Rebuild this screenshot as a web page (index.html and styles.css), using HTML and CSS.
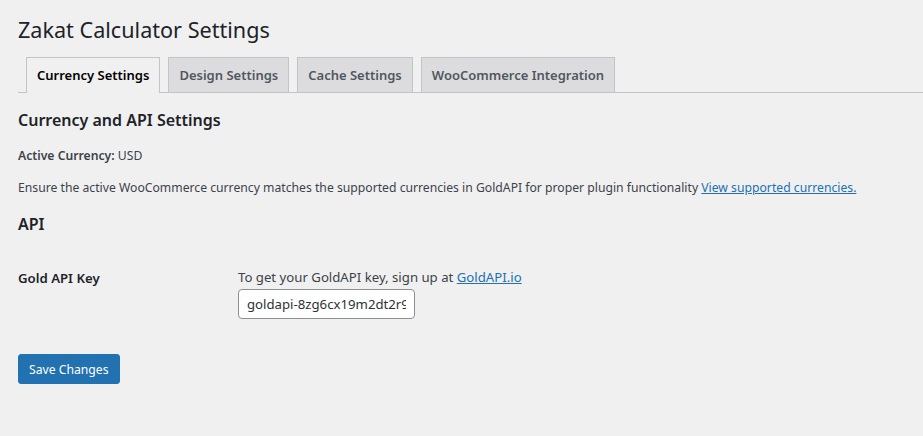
FILE: index.html
```html
<!DOCTYPE html>
<html lang="en">
<head>
  <meta charset="UTF-8">
  <title>Zakat Calculator Settings</title>
  <link rel="stylesheet" href="styles.css">
</head>
<body>

<div class="wrap">
  <h1>Zakat Calculator Settings</h1>

  <nav class="nav-tab-wrapper">
    <a href="#" class="nav-tab nav-tab-active">Currency Settings</a>
    <a href="#" class="nav-tab">Design Settings</a>
    <a href="#" class="nav-tab">Cache Settings</a>
    <a href="#" class="nav-tab">WooCommerce Integration</a>
  </nav>

  <form>
    <h2>Currency and API Settings</h2>
    <p><strong>Active Currency:</strong> USD</p>
    <p>Ensure the active WooCommerce currency matches the supported currencies in GoldAPI for proper plugin functionality <a href="#">View supported currencies.</a></p>

    <h2>API</h2>
    <table class="form-table">
      <tr>
        <th>Gold API Key</th>
        <td>
          <p class="desc">To get your GoldAPI key, sign up at <a href="#">GoldAPI.io</a></p>
          <input type="text" class="api-input" value="goldapi-8zg6cx19m2dt2r9x-io">
        </td>
      </tr>
    </table>

    <p class="submit"><button type="button" class="button-primary">Save Changes</button></p>
  </form>
</div>

</body>
</html>
```

FILE: styles.css
```css
body {
  margin: 0;
  background-color: #f0f0f1;
  color: #3c434a;
  font-family: "Noto Sans", sans-serif;
  font-size: 12.2px;
  line-height: 1.4;
}
.wrap {
  padding: 0 0 0 18px;
}
h1 {
  font-size: 21.6px;
  font-weight: 400;
  color: #1d2327;
  margin: 0;
  padding: 15px 0 4px;
  line-height: 30px;
}
.nav-tab-wrapper {
  display: flex;
  gap: 8px;
  padding: 8px 0 0 8px;
  border-bottom: 1px solid #c3c4c7;
}
.nav-tab {
  display: block;
  padding: 5px 10px;
  font-size: 13px;
  line-height: 24px;
  font-weight: 600;
  color: #50575e;
  text-decoration: none;
  background: #dcdcde;
  border: 1px solid #c3c4c7;
  border-bottom: none;
}
.nav-tab-active {
  background: #f0f0f1;
  color: #000;
  margin-bottom: -1px;
  padding-bottom: 6px;
}
h2 {
  font-size: 16px;
  font-weight: 600;
  color: #1d2327;
  margin: 16px 0 15px;
  line-height: 22px;
}
p {
  margin: 13px 0;
  line-height: 19px;
}
strong {
  font-weight: 600;
}
a {
  color: #2271b1;
}
.form-table {
  border-collapse: collapse;
  margin-top: 15px;
}
.form-table th {
  width: 200px;
  text-align: left;
  vertical-align: top;
  padding: 20px 10px 20px 0;
  font-weight: 600;
  font-size: 13.2px;
  color: #1d2327;
  line-height: 1.3;
}
.form-table td {
  padding: 15px 10px;
  font-size: 13.2px;
  vertical-align: top;
}
.desc {
  margin: 3px 0 0;
  line-height: 19px;
}
.api-input {
  width: 177px;
  height: 30px;
  box-sizing: border-box;
  padding: 0 8px;
  font-family: inherit;
  font-size: 13.2px;
  color: #2c3338;
  border: 1px solid #8c8f94;
  border-radius: 4px;
  background: #fff;
  margin-top: 2px;
  display: block;
}
.submit {
  margin-top: 20px;
}
.button-primary {
  background: #2271b1;
  border: 1px solid #2271b1;
  color: #fff;
  border-radius: 3px;
  font-family: inherit;
  font-size: 12.2px;
  height: 30px;
  padding: 0 10px;
}
```
